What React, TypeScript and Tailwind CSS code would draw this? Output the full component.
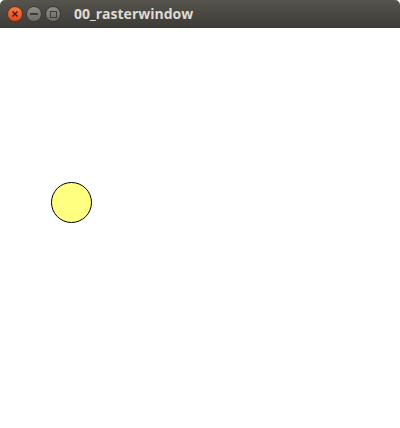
export default function App() {
  return (
    <div className="w-[400px] h-[428px] bg-white flex flex-col overflow-hidden">
      <div className="h-[28px] shrink-0 flex items-center bg-gradient-to-b from-[#56544d] to-[#3c3b37] rounded-t-[5px] pl-[7px]">
        <div className="flex items-center gap-[3px]">
          <div className="w-[16px] h-[16px] rounded-full bg-gradient-to-b from-[#f7784a] to-[#df4a16] border border-[#6e3018] flex items-center justify-center">
            <svg width="8" height="8" viewBox="0 0 8 8">
              <path d="M1.5 1.5 L6.5 6.5 M6.5 1.5 L1.5 6.5" stroke="#4a1a08" strokeWidth="1.4" />
            </svg>
          </div>
          <div className="w-[16px] h-[16px] rounded-full bg-gradient-to-b from-[#8f8d87] to-[#6d6b65] border border-[#3a3935] flex items-center justify-center">
            <div className="w-[8px] h-[2px] bg-[#3c3b37]" />
          </div>
          <div className="w-[16px] h-[16px] rounded-full bg-gradient-to-b from-[#8f8d87] to-[#6d6b65] border border-[#3a3935] flex items-center justify-center">
            <div className="w-[7px] h-[7px] border-[1.5px] border-[#3c3b37]" />
          </div>
        </div>
        <span className="ml-[13px] text-[14px] font-bold text-[#dfdbd2] font-['Open_Sans',sans-serif] leading-none">
          00_rasterwindow
        </span>
      </div>
      <div className="flex-1 relative">
        <svg className="absolute left-[50px] top-[153px]" width="43" height="43" viewBox="0 0 43 43">
          <circle cx="21.5" cy="21.5" r="20" fill="#ffff80" stroke="#000" strokeWidth="1" />
        </svg>
      </div>
    </div>
  );
}
